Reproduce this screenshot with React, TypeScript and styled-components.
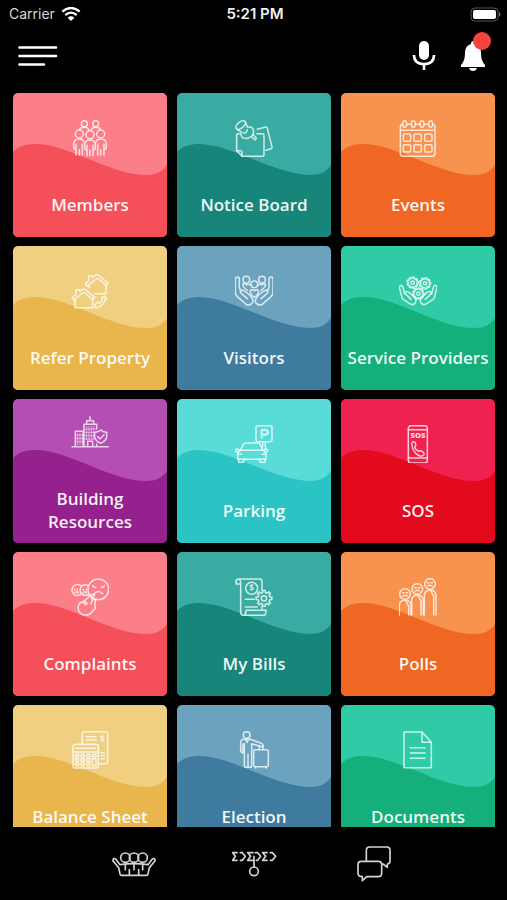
import React from "react";
import styled, { createGlobalStyle } from "styled-components";

const GlobalStyle = createGlobalStyle`
  *, *::before, *::after { box-sizing: border-box; }
  body { margin: 0; background: #000; }
  button { font: inherit; color: inherit; border: 0; background: none; padding: 0; cursor: pointer; }
`;

const Screen = styled.div`
  display: flex;
  flex-direction: column;
  height: 100vh;
  background: #000;
  color: #fff;
  font-family: "Open Sans", "Noto Sans", sans-serif;
`;

const StatusBar = styled.div`
  display: grid;
  grid-template-columns: 1fr auto 1fr;
  align-items: center;
  height: 28px;
  padding: 0 6px 0 9px;
  font-family: Inter, "Liberation Sans", sans-serif;
  font-size: 14px;
  line-height: 20px;
  flex: none;
`;

const Carrier = styled.div`
  display: flex;
  align-items: center;
  gap: 6px;
  color: #d8d8d8;
`;

const Clock = styled.time`
  font-size: 15px;
  font-weight: 600;
  color: #f0f0f0;
`;

const Battery = styled.svg`
  justify-self: end;
`;

const TopBar = styled.header`
  display: flex;
  align-items: center;
  justify-content: space-between;
  height: 56px;
  padding: 0 21px 0 18px;
  flex: none;
`;

const Actions = styled.div`
  display: flex;
  align-items: center;
  gap: 24px;
`;

const IconButton = styled.button`
  position: relative;
  display: flex;
`;

const Badge = styled.span`
  position: absolute;
  top: -8px;
  right: -5px;
  width: 18px;
  height: 18px;
  border-radius: 50%;
  background: #f5443b;
`;

const Scroller = styled.main`
  flex: 1;
  min-height: 0;
  overflow-y: auto;
  scrollbar-width: none;
  padding: 9px 12px 9px 13px;
`;

const Grid = styled.div`
  display: grid;
  grid-template-columns: repeat(3, minmax(0, 1fr));
  grid-auto-rows: 144px;
  gap: 9px 10px;
`;

const Tile = styled.button<{ $light: string; $dark: string }>`
  position: relative;
  isolation: isolate;
  display: flex;
  flex-direction: column;
  align-items: center;
  justify-content: center;
  gap: 36px;
  padding: 4px 4px 0;
  overflow: hidden;
  border-radius: 5px;
  background: ${(p) => p.$light};
  color: ${(p) => p.$dark};
`;

const Wave = styled.svg`
  position: absolute;
  inset: 0;
  z-index: -1;
  width: 100%;
  height: 100%;
  fill: currentColor;
`;

const TileIcon = styled.svg`
  width: 38px;
  height: 38px;
  flex: none;
  fill: none;
  stroke: rgba(255, 255, 255, 0.76);
  stroke-width: 4.6;
  stroke-linecap: round;
  stroke-linejoin: round;
`;

const SosText = styled.text`
  font: 800 23px "Open Sans", sans-serif;
  fill: rgba(255, 255, 255, 0.85);
  stroke: none;
`;

const SignText = styled.text`
  font: 700 25px "Open Sans", sans-serif;
  fill: rgba(255, 255, 255, 0.8);
  stroke: none;
`;

const Label = styled.span`
  font-size: 17px;
  line-height: 23px;
  font-weight: 600;
  color: rgba(255, 255, 255, 0.94);
  text-align: center;
`;

const TabBar = styled.nav`
  display: flex;
  justify-content: center;
  height: 73px;
  flex: none;
`;

const Tab = styled.button`
  flex: 0 1 120px;
  display: flex;
  align-items: center;
  justify-content: center;
`;

const TabIcon = styled.svg`
  fill: none;
  stroke: #d4d4d4;
  stroke-width: 5;
  stroke-linecap: round;
  stroke-linejoin: round;
`;

const gearPath = (cx: number, cy: number, outer: number, inner: number, teeth: number) => {
  const step = (Math.PI * 2) / teeth;
  const at = (r: number, a: number) =>
    `${(cx + r * Math.cos(a)).toFixed(1)} ${(cy + r * Math.sin(a)).toFixed(1)}`;
  let d = "";
  for (let i = 0; i < teeth; i++) {
    const a = i * step;
    d += `${i ? "L" : "M"}${at(inner, a - step * 0.3)}L${at(outer, a - step * 0.2)}L${at(outer, a + step * 0.2)}L${at(inner, a + step * 0.3)}`;
  }
  return d + "Z";
};

const MembersIcon = () => (
  <>
    <circle cx="40" cy="14" r="9" />
    <circle cx="74" cy="14" r="9" />
    <path d="M26 32Q28 25 40 25Q51 25 54 34M60 34Q63 25 74 25Q86 25 88 32" />
    <circle cx="25" cy="45" r="12" />
    <circle cx="89" cy="45" r="12" />
    <circle cx="57" cy="47" r="12" />
    <path d="M15 108V92Q8 90 8 84V76Q8 60 25 60Q36 60 39 68M15 76V92M25 92V108M34 76V108" />
    <path d="M99 108V92Q106 90 106 84V76Q106 60 89 60Q78 60 75 68M99 76V92M89 92V108M80 76V108" />
    <path d="M48 110V95Q41 92 41 86V78Q41 63 57 63Q73 63 73 78V86Q73 92 66 95V110M48 79V95M66 79V95M57 93V110" />
  </>
);

const NoticeIcon = () => (
  <>
    <path d="M13 44H9Q5 44 5 49V95L21 112H82Q87 112 87 107V49Q87 44 82 44H66" />
    <path d="M5 95H16Q21 95 21 100V112M67 31L92 24Q96 23 97 28L111 84Q112 88 108 89L93 94" />
    <ellipse cx="17" cy="18" rx="17" ry="9" transform="rotate(-38 17 18)" />
    <path d="M7 32L19 39Q15 51 25 57Q36 61 48 53Q60 43 54 30Q49 21 38 25L31 10" />
    <path d="M25 41Q33 46 37 32M50 54L60 63L64 58L55 47" />
  </>
);

const EventsIcon = () => (
  <>
    <path d="M10 16Q4 18 4 25V103Q4 112 13 112H99Q108 112 108 103V25Q108 18 102 16M24 16H36M50 16H62M76 16H88M4 34H108" />
    {[17, 43, 69, 95].map((x) => (
      <ellipse key={x} cx={x} cy="15" rx="6" ry="10" />
    ))}
    {[13, 45, 77].map((x) => (
      <React.Fragment key={x}>
        <rect x={x} y="45" width="22" height="22" rx="4" />
        <rect x={x} y="77" width="22" height="22" rx="4" />
      </React.Fragment>
    ))}
  </>
);

const ReferIcon = () => (
  <>
    <path d="M43 35L53 27V12H65V17L74 9Q78 6 83 10L111 33L106 40L79 18L48 43Z" />
    <path d="M55 41V48M105 41V65H72" />
    <path d="M4 77L15 68V53H26V58L33 53Q38 49 43 53L71 76L66 83L38 60L9 84Z" />
    <path d="M12 83V107H65V83" />
    <path d="M92 77L101 72L107 83L102 81Q99 103 76 107Q70 107 72 98L80 90Q86 98 93 86V80Z" />
  </>
);

const handLeft =
  "M13 46V22Q13 15 7 15Q1 15 1 22V60Q1 68 7 74L32 96Q42 103 51 94Q57 88 51 78Q43 66 31 59Q21 51 17 57Q14 62 22 67L37 80M13 46L17 57";

const VisitorsIcon = () => (
  <>
    <path d={handLeft} />
    <path d={handLeft} transform="translate(115 0) scale(-1 1)" />
    <circle cx="34" cy="23" r="10" />
    <circle cx="81" cy="23" r="10" />
    <circle cx="58" cy="37" r="10" />
    <path d="M37 55Q22 45 24 36Q31 33 35 39Q40 34 47 40M78 55Q93 45 91 36Q84 33 80 39Q75 34 68 40" />
    <path d="M58 76Q43 66 46 55Q53 50 58 57Q63 50 70 55Q73 66 58 76Z" />
  </>
);

const palmLeft =
  "M17 66L12 46Q9 38 4 41Q0 43 2 50L9 77Q10 81 14 83L32 95Q41 101 48 94Q54 86 47 76L31 62Q22 55 19 61Q18 66 24 70L36 82";

const ServiceIcon = () => (
  <>
    <path d={palmLeft} />
    <path d={palmLeft} transform="translate(115 0) scale(-1 1)" />
    <path d={gearPath(41, 32, 17, 13, 9)} />
    <path d={gearPath(78, 34, 17, 13, 9)} />
    <path d={gearPath(58, 65, 17, 13, 9)} />
    <circle cx="41" cy="32" r="5" />
    <circle cx="78" cy="34" r="5" />
    <circle cx="58" cy="65" r="5" />
  </>
);

const BuildingIcon = () => (
  <>
    <path d="M3 101H112M13 101V55H37V101M39 101V34H77V48M77 93V101M47 34V23H68V34M57 23V11M50 101V85H65V101" />
    <path strokeWidth="2" d="M20 61V95M27 61V95M34 61V95M15 66H36M15 76H36M15 86H36M47 40V80M54 40V80M61 40V80M68 40V80M41 48H75M41 58H70M41 68H68M41 78H68" />
    <path d="M89 51Q97 58 107 58V70Q107 83 89 91Q71 83 71 70V58Q81 58 89 51ZM80 71L87 78L99 65" />
  </>
);

const ParkingIcon = () => (
  <>
    <rect x="63" y="2" width="48" height="48" rx="5" />
    <path strokeWidth="6" d="M80 38V15H90Q99 15 99 22Q99 29 90 29H80" />
    <path d="M83 51V65M91 51V73" />
    <path d="M16 76L25 58Q27 54 32 54H68Q73 54 75 58L84 76" />
    <path d="M16 76H84Q93 80 93 88V103H8V88Q8 80 16 76ZM9 80H4Q0 80 1 76Q3 72 8 72L13 76M91 80H96Q99 79 98 75Q96 72 92 72L87 76" />
    <path d="M11 103V112H25L28 103M73 103L76 112H90V103M9 88H20M81 88H92" />
  </>
);

const SosIcon = () => (
  <>
    <rect x="28" y="2" width="57" height="112" rx="8" />
    <path d="M28 14H85M28 99H85" />
    <SosText x="57" y="40" textAnchor="middle">SOS</SosText>
    <path d="M40 51Q49 48 50 58Q51 63 47 68Q51 76 59 79Q64 75 69 79Q78 84 74 90Q68 97 57 90Q41 80 39 60Q38 55 40 51Z" />
  </>
);

const ComplaintsIcon = () => (
  <>
    <circle cx="82" cy="34" r="31" />
    <path d="M51 23Q42 18 34 23Q24 31 29 44Q35 56 52 50M30 23Q18 16 8 24Q-1 34 6 46Q14 57 30 50" />
    <path d="M65 23Q68 30 75 28M90 28Q97 30 100 23M69 48Q82 33 95 47M11 34V36M19 34V36M12 45Q17 38 22 45M36 34V36M46 34V36M36 45Q41 38 47 45" />
    <path d="M61 63L70 53Q66 47 60 51L39 70Q25 73 22 84Q19 98 29 107Q42 115 57 108L73 91Q70 81 73 72Q75 67 70 64Q63 65 60 78M41 70L49 77M36 73L44 80" />
  </>
);

const BillsIcon = () => (
  <>
    <path d="M17 18V103Q17 112 25 112H88Q93 112 93 97H33Q33 112 25 112M17 18H3V11Q3 3 11 3H74Q81 3 81 11V37M11 3Q17 4 17 18M81 85V96" />
    <circle cx="50" cy="31" r="18" />
    <SignText x="50" y="40" textAnchor="middle">$</SignText>
    <path d="M31 64H58M31 87H67" />
    <path d={gearPath(87, 61, 24, 18, 8)} />
    <circle cx="87" cy="61" r="8" />
  </>
);

const voters = [
  { x: 18, y: 48 },
  { x: 55, y: 33 },
  { x: 93, y: 18 },
];

const PollsIcon = () => (
  <>
    {voters.map(({ x, y }) => (
      <React.Fragment key={x}>
        <circle cx={x} cy={y} r="16" />
        <path d={`M${x - 8} ${y - 4}h5M${x + 3} ${y - 4}h5M${x - 7} ${y + 6}q7 -5 14 0`} />
        <path d={`M${x - 17} 111V${y + 34}Q${x - 16} ${y + 19} ${x} ${y + 19}Q${x + 17} ${y + 19} ${x + 18} ${y + 34}V111`} />
        <path d={`M${x + 11} 111V${y + 36}L${x + 3} ${y + 22}`} />
      </React.Fragment>
    ))}
  </>
);

const BalanceIcon = () => (
  <>
    <path d="M34 39V8Q34 2 40 2H104Q110 2 110 8V92Q110 98 104 98H84" />
    <SignText x="94" y="33" textAnchor="middle">$</SignText>
    <path d="M46 17H76M46 27H76M90 65H101M90 74H101M90 83H101" />
    <rect x="6" y="40" width="76" height="71" rx="7" />
    <path d="M14 52H74M6 63H82" />
    {[13, 30, 47].map((x) => (
      <React.Fragment key={x}>
        <rect x={x} y="70" width="10" height="8" rx="2" />
        <rect x={x} y="83" width="10" height="8" rx="2" />
        <rect x={x} y="96" width="10" height="8" rx="2" />
      </React.Fragment>
    ))}
    <rect x="64" y="70" width="11" height="8" rx="2" />
    <rect x="64" y="83" width="11" height="21" rx="2" />
  </>
);

const ElectionIcon = () => (
  <>
    <circle cx="35" cy="12" r="10" />
    <path d="M24 66Q17 64 17 57V36Q17 25 27 25H43Q48 25 52 27L77 36Q85 39 84 44Q82 49 75 46L50 38V104Q50 109 44 109Q39 109 39 104V70M24 38V66M28 38V104Q28 109 34 109Q39 109 39 104M31 25L36 34L41 25" />
    <rect x="56" y="56" width="44" height="51" rx="4" />
    <path d="M73 56V45M84 56V45M62 108V111M94 108V111" />
  </>
);

const DocumentsIcon = () => (
  <path d="M15 3H69L97 34V110H15ZM69 3V34H97M34 50H78M34 66H78M34 82H78" />
);

const coral = { light: "#fb7e88", dark: "#f54f5a" };
const teal = { light: "#3aaba3", dark: "#17857a" };
const orange = { light: "#f8924f", dark: "#f06724" };
const gold = { light: "#f0cf80", dark: "#e8b64d" };
const blue = { light: "#6ba3bf", dark: "#3f7b9f" };
const green = { light: "#2ecba6", dark: "#14af7b" };
const purple = { light: "#b54eb2", dark: "#94218d" };
const aqua = { light: "#59dbd8", dark: "#2bc4c4" };
const red = { light: "#ef214f", dark: "#e40a1d" };

const tiles = [
  { label: "Members", color: coral, Icon: MembersIcon },
  { label: "Notice Board", color: teal, Icon: NoticeIcon },
  { label: "Events", color: orange, Icon: EventsIcon },
  { label: "Refer Property", color: gold, Icon: ReferIcon },
  { label: "Visitors", color: blue, Icon: VisitorsIcon },
  { label: "Service Providers", color: green, Icon: ServiceIcon },
  { label: "Building Resources", color: purple, Icon: BuildingIcon },
  { label: "Parking", color: aqua, Icon: ParkingIcon },
  { label: "SOS", color: red, Icon: SosIcon },
  { label: "Complaints", color: coral, Icon: ComplaintsIcon },
  { label: "My Bills", color: teal, Icon: BillsIcon },
  { label: "Polls", color: orange, Icon: PollsIcon },
  { label: "Balance Sheet", color: gold, Icon: BalanceIcon },
  { label: "Election", color: blue, Icon: ElectionIcon },
  { label: "Documents", color: green, Icon: DocumentsIcon },
];

export default function App() {
  return (
    <Screen>
      <GlobalStyle />
      <StatusBar>
        <Carrier>
          Carrier
          <svg width="20" height="14" viewBox="0 0 60 42" fill="none" stroke="#fff" strokeWidth="7" aria-hidden="true">
            <path d="M4 14Q30-8 56 14M13 24Q30 10 47 24" />
            <path d="M30 42L20 32Q30 24 40 32Z" fill="#fff" stroke="none" />
          </svg>
        </Carrier>
        <Clock>5:21 PM</Clock>
        <Battery width="31" height="15" viewBox="0 0 31 15" aria-hidden="true">
          <rect x="1" y="1" width="27" height="13" rx="4" fill="none" stroke="#555" />
          <rect x="3" y="3" width="23" height="9" rx="2" fill="#fff" />
          <path d="M29 5Q32 7 29 10Z" fill="#777" />
        </Battery>
      </StatusBar>

      <TopBar>
        <IconButton aria-label="Menu">
          <svg width="40" height="22" viewBox="0 0 40 22" stroke="#fff" strokeWidth="2.6" strokeLinecap="round" aria-hidden="true">
            <path d="M1.5 2.5H38M1.5 11H38M1.5 19.5H26" />
          </svg>
        </IconButton>
        <Actions>
          <IconButton aria-label="Voice search">
            <svg width="24" height="32" viewBox="0 0 24 32" aria-hidden="true">
              <rect x="7" y="1" width="10" height="19" rx="5" fill="#fff" />
              <path d="M2 15Q2 24 12 24Q22 24 22 15M12 24V30" fill="none" stroke="#fff" strokeWidth="2.6" />
            </svg>
          </IconButton>
          <IconButton aria-label="Notifications">
            <svg width="26" height="32" viewBox="0 0 26 32" aria-hidden="true">
              <path d="M13 1Q15 1 15 4Q21 6 21 13Q21 21 25 25V27H1V25Q5 21 5 13Q5 6 11 4Q11 1 13 1Z" fill="#fff" />
              <path d="M9 28H17Q16 31 13 31Q10 31 9 28Z" fill="#fff" />
            </svg>
            <Badge />
          </IconButton>
        </Actions>
      </TopBar>

      <Scroller>
        <Grid>
          {tiles.map(({ label, color, Icon }) => (
            <Tile key={label} $light={color.light} $dark={color.dark}>
              <Wave viewBox="0 0 154 144" preserveAspectRatio="none" aria-hidden="true">
                <path d="M0 59C6 53 13 51 22 51C55 51 98 82 133 82C143 82 149 79 154 72V144H0Z" />
              </Wave>
              <TileIcon viewBox="0 0 114 114" aria-hidden="true">
                <Icon />
              </TileIcon>
              <Label>{label}</Label>
            </Tile>
          ))}
        </Grid>
      </Scroller>

      <TabBar>
        <Tab aria-label="Community">
          <TabIcon width="44" height="26" viewBox="0 0 132 78" aria-hidden="true">
            <circle cx="40" cy="20" r="14" />
            <circle cx="66" cy="20" r="14" />
            <circle cx="92" cy="20" r="14" />
            <path d="M24 41L11 24Q5 20 3 26Q2 30 6 33L20 50L24 69Q25 73 29 73H103Q107 73 108 69L112 50L126 33Q130 30 129 26Q127 20 121 24L108 41Q66 35 24 41Z" />
            <path d="M40 40V56M52 56V73M66 40V56M80 56V73M92 40V56" />
          </TabIcon>
        </Tab>
        <Tab aria-label="Timeline">
          <TabIcon width="46" height="26" viewBox="0 0 138 78" aria-hidden="true">
            <path d="M18 5H5L13 16L5 28H18M28 5H34L43 16L34 28H28M66 5H50L59 16L50 28H66M73 5H80L89 16L80 28H76M108 5H95L104 16L95 28H108M118 5H124L134 16L124 28H118M69 16V47" />
            <circle cx="69" cy="61" r="13" />
          </TabIcon>
        </Tab>
        <Tab aria-label="Chat">
          <TabIcon width="34" height="36" viewBox="0 0 102 108" aria-hidden="true">
            <path d="M28 45V13Q28 3 38 3H89Q99 3 99 13V45Q99 54 91 54V64L78 54H74" />
            <path d="M13 46H64Q74 46 74 56V82Q74 92 64 92H29L16 104V92Q3 92 3 82V56Q3 46 13 46Z" />
          </TabIcon>
        </Tab>
      </TabBar>
    </Screen>
  );
}
